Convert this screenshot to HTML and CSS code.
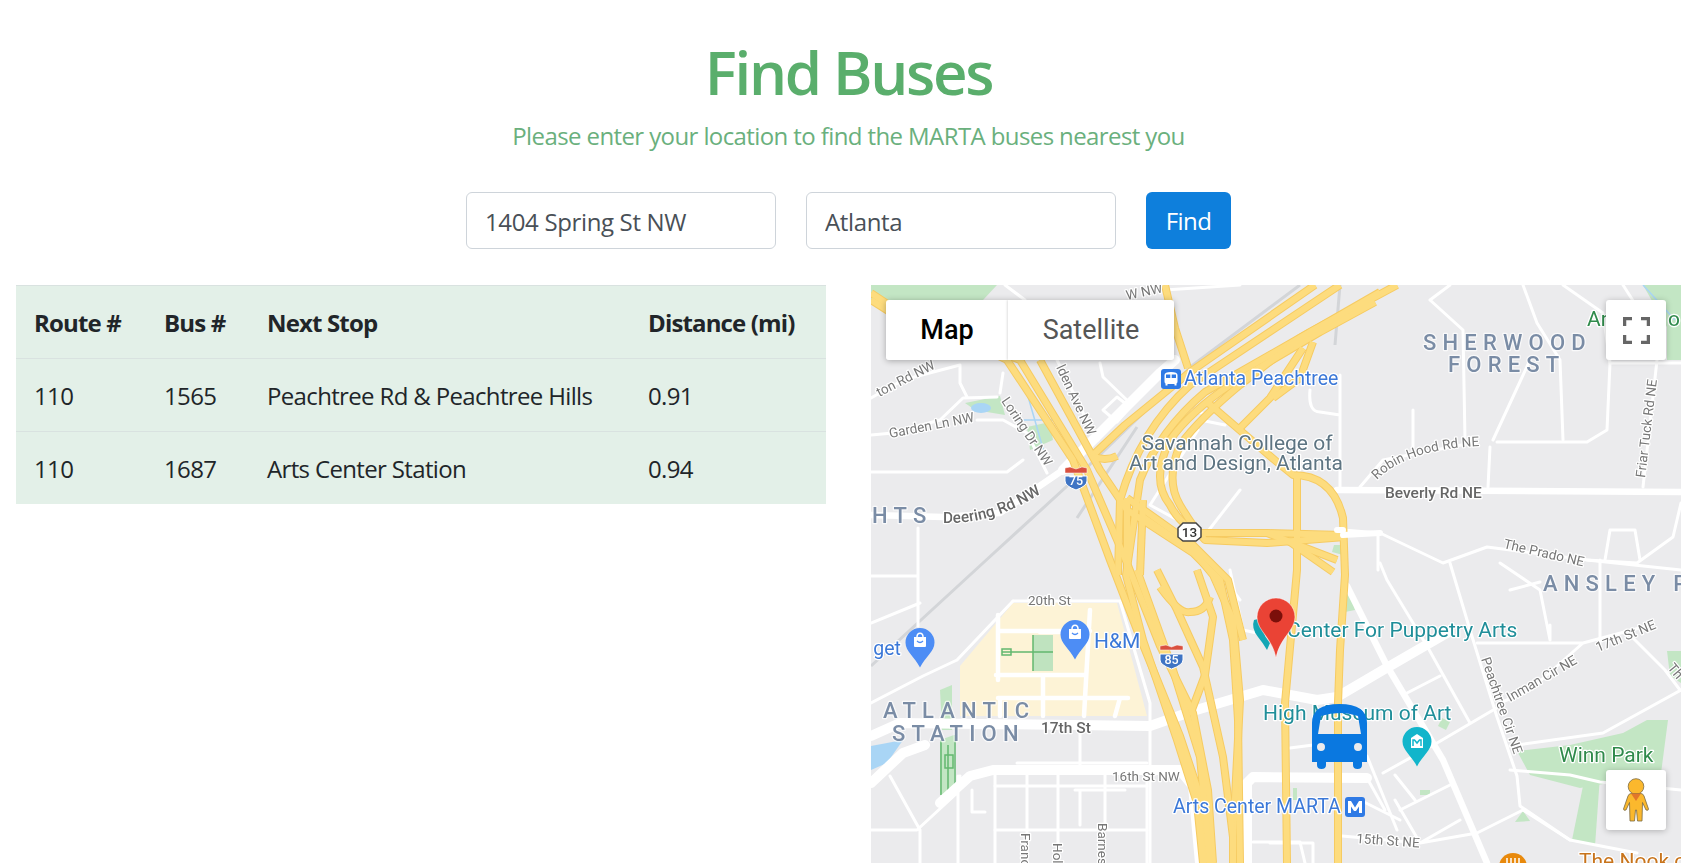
FILE: index.html
```html
<!DOCTYPE html>
<html lang="en">
<head>
<meta charset="utf-8">
<title>Find Buses</title>
<link rel="stylesheet" href="styles.css">
</head>
<body>
<header class="head">
  <h1 class="title">Find Buses</h1>
  <p class="lead">Please enter your location to find the MARTA buses nearest you</p>
  <form class="search">
    <input class="field" type="text" value="1404 Spring St NW">
    <input class="field" type="text" value="Atlanta">
    <button class="find" type="button">Find</button>
  </form>
</header>
<main class="content">
  <table class="buses">
    <colgroup><col class="c1"><col class="c2"><col class="c3"><col class="c4"></colgroup>
    <thead>
      <tr><th>Route #</th><th>Bus #</th><th>Next Stop</th><th>Distance (mi)</th></tr>
    </thead>
    <tbody>
      <tr><td>110</td><td>1565</td><td>Peachtree Rd &amp; Peachtree Hills</td><td>0.91</td></tr>
      <tr><td>110</td><td>1687</td><td>Arts Center Station</td><td>0.94</td></tr>
    </tbody>
  </table>
  <div class="map">
    <svg class="canvas" viewBox="871 285 810 578" xmlns="http://www.w3.org/2000/svg">
      <defs>
        <g id="hwys">
          <path d="M871 293L886 303L1007 360L1073 460L1110 560L1137 630L1180 736L1200 796L1205 863"/>
          <path d="M871 300L890 312L1020 360L1087 470L1127 563L1160 646L1193 713L1208 790L1213 863"/>
          <path d="M1040 360L1100 470L1127 510L1193 553L1220 580L1233 640L1238 720L1240 863"/>
          <path d="M1397 285L1310 332L1205 392Q1160 430 1140 480L1126 575L1143 640L1177 740L1197 803L1203 863"/>
          <path d="M1340 285L1280 325L1190 385Q1140 430 1120 500L1118 575"/>
          <path d="M1315 285L1190 372L1125 425L1092 456"/>
          <path d="M1092 456Q1105 462 1117 456"/>
          <path d="M1375 302L1320 332L1230 385Q1190 412 1170 440Q1150 480 1170 505Q1180 525 1200 533L1267 533L1343 535"/>
          <path d="M1380 292L1300 338L1240 385Q1200 418 1180 445Q1165 480 1180 505Q1195 530 1205 540L1267 543L1345 537"/>
          <path d="M1127 498L1193 545L1228 580L1243 640"/>
          <path d="M1140 515L1195 553L1213 575L1233 620L1240 700L1233 837L1233 863"/>
          <path d="M1157 570L1177 610L1203 667L1223 757L1233 837"/>
          <path d="M1197 570L1213 617L1205 675L1190 715"/>
          <path d="M1160 587Q1180 615 1190 612Q1205 612 1210 597"/>
          <path d="M1137 570L1173 670L1200 757L1210 863"/>
          <path d="M1165 285L1175 328L1188 368"/>
          <path d="M1207 402L1277 462L1293 475Q1333 475 1343 518L1345 575L1340 650L1338 703L1338 863"/>
          <path d="M1297 478L1297 570L1285 703L1287 863"/>
          <path d="M1303 348L1270 398L1240 428"/>
          <path d="M1313 342L1300 378L1273 398"/>
          <path d="M1267 533L1337 560"/>
          <path d="M1290 542L1333 572"/>
          <path d="M1127 498L1127 575"/>
          <path d="M1143 500L1140 575"/>
        </g>
      </defs>
      <rect class="land" x="871" y="285" width="810" height="578"/>

      <g class="park">
        <polygon points="871,285 997,285 983,300 871,300"/>
        <polygon points="1643,285 1681,285 1681,360 1667,360 1667,327"/>
        <polygon points="1517,751 1570,745 1623,733 1647,720 1668,720 1660,781 1620,781 1580,788 1530,775"/>
        <polygon points="1585,776 1600,776 1595,846 1572,840"/>
        <polygon points="1667,651 1681,651 1681,683 1670,676"/>
        <polygon points="1523,811 1530,821 1515,822"/>
        <polygon points="1027,427 1050,422 1053,440 1030,450"/>
        <polygon points="965,403 1000,396 1005,415 975,410"/>
        <polygon points="1340,600 1350,590 1355,610 1345,612"/>
        <polygon points="1334,545 1345,545 1343,555 1332,552"/>
        <polygon points="1293,788 1297,788 1297,800 1293,800"/>
        <polygon points="1442,718 1450,722 1446,730 1438,726"/>
        <polygon points="940,690 952,685 952,730 942,730"/>
        <polygon points="940,740 954,735 954,795 940,795"/>
        <polygon points="1420,790 1430,790 1430,795 1420,795"/>
      </g>
      <g class="water">
        <ellipse cx="981" cy="408" rx="10" ry="5"/>
        <polygon points="871,746 903,740 887,763 871,770"/>
      </g>
      <path class="stream" d="M1027 393L1044 452M1017 420L1060 420M1643 285L1675 320"/>

      <polygon class="campus" points="960,666 1013,603 1117,603 1147,716 960,716"/>
      <rect class="park-solid" x="1033" y="635" width="20" height="36"/>
      <path class="park-line" d="M1002 652L1053 652M1033 635L1033 671M1002 649L1011 649L1011 655L1002 655Z"/>
      <path class="park-line" d="M941 740L941 795M948 745L948 795M955 735L955 785M945 755L953 755L953 768L945 768Z"/>

      <path class="rail" d="M871 666L983 563L1077 477L1193 365L1300 285M1077 518L1137 427M1335 345L1340 285"/>

      <g class="road thin">
        <path d="M871 398L903 380L960 365L960 383L967 397M1003 373L1000 393"/>
        <path d="M871 435L893 433L940 420L963 398L997 397M977 420L1003 420L1027 433L1047 473"/>
        <path d="M871 472L1007 472L1023 460"/>
        <path d="M1057 360L1093 433L1098 440"/>
        <path d="M1100 363L1103 377L1130 403M1103 410L1117 397L1130 407L1117 422Z"/>
        <path d="M1005 285L1025 300M1165 290L1240 285"/>
        <path d="M1198 430L1150 505L1205 535L1240 490M1200 420L1225 425M1210 560L1240 600M1190 410L1210 415"/>
        <path d="M1340 375L1340 490M1310 390Q1308 412 1320 412L1340 415M1343 530L1380 533L1443 563L1487 547L1587 560L1681 570M1378 533L1378 570"/>
        <path d="M1430 300L1450 285M1430 300L1463 330L1465 440M1523 285L1537 323L1560 360L1563 440M1530 360L1493 440"/>
        <path d="M1497 442L1587 442L1607 430L1610 363L1681 363M1490 447L1488 487M1360 487L1383 460L1477 442M1413 410L1413 447"/>
        <path d="M1657 360L1643 487M1563 285L1603 313L1610 363M1623 285L1637 307"/>
        <path d="M1681 503L1673 537L1637 563L1587 560M1605 560L1610 530L1635 530L1640 560"/>
        <path d="M1450 563L1470 630L1497 717L1517 776L1520 806L1570 840L1637 853"/>
        <path d="M1477 643L1583 643L1647 626M1500 703L1530 690L1583 643M1630 635L1665 670L1680 690"/>
        <path d="M1510 746L1603 733L1681 690M1510 770L1570 775L1600 782L1681 790M1437 743L1500 706M1383 773L1437 743"/>
        <path d="M1427 646L1470 723M1407 693L1440 676M1380 563L1387 580L1427 646M1367 756L1397 830"/>
        <path d="M1342 836L1420 843L1477 833L1523 810L1570 840M1270 843L1313 843L1313 863M1395 775L1415 800M1400 810L1450 785M1395 800L1420 843M1420 843L1460 820"/>
        <path d="M1500 563L1540 590L1550 640M1510 590L1540 582M1550 625L1550 640M1600 560L1600 643"/>
        <path d="M918 528L918 563L918 626M871 623L920 603M871 576L918 576"/>
        <path d="M1013 601L1120 601L1150 703L1150 863"/>
        <path d="M957 660L1013 601M871 703L923 676L957 660"/>
        <path d="M890 776L920 830L920 863M871 830L917 830L957 793L960 776M958 776L958 863"/>
        <path d="M995 770L995 863M1027 770L1027 863M1058 770L1058 863M1105 770L1105 830M1147 770L1147 863"/>
        <path d="M995 786L1147 786M995 830L1147 830M1017 763L1147 763M1080 733L1080 770"/>
        <path d="M972 790L972 812L985 812M1075 790L1125 790M1080 790L1080 825"/>
        <path d="M1230 570L1243 630L1257 633M1290 748L1313 745"/>
        <path d="M1367 778L1385 810M1360 800L1400 820"/>
        <path d="M1253 842L1300 842L1305 863"/>
      </g>
      <g class="road block">
        <path d="M998 631L1090 631M998 615L998 680M996 675L1085 675M1043 675L1043 716M1090 610L1084 716M1084 698L1128 698M998 698L1084 698M1040 632L1085 632M1000 716L1000 698M1120 698L1115 716"/>
      </g>
      <g class="road wide">
        <path d="M1063 470L1160 373L1175 360"/>
        <path d="M871 736L900 723L1150 726L1193 711L1263 690L1317 700L1337 697L1383 670L1447 633"/>
        <path d="M871 783L903 753L925 745"/>
        <path d="M940 803L970 776L993 770L1180 770L1193 786L1200 863"/>
        <path d="M1247 863L1247 783L1253 777L1367 778"/>
      </g>
      <g class="road mid">
        <path d="M871 515L943 517L1000 513L1063 470"/>
        <path d="M1337 490L1681 492"/>
        <path d="M1347 586L1387 666L1443 760L1487 863"/>
      </g>

      <use href="#hwys" class="hw-edge"/>
      <use href="#hwys" class="hw-fill"/>
      <path class="road over" d="M1337 530L1343 530M1343 535L1380 533"/>

      <text class="hood" x="1423" y="350">SHERWOOD</text>
      <text class="hood" x="1448" y="372">FOREST</text>
      <text class="hood" x="1543" y="591">ANSLEY P</text>
      <text class="hood" x="872" y="523">HTS</text>
      <text class="hood" x="883" y="718">ATLANTIC</text>
      <text class="hood" x="892" y="741">STATION</text>

      <text class="poi blue" x="1184" y="385">Atlanta Peachtree</text>
      <text class="poi slate large" x="1237" y="450" text-anchor="middle">Savannah College of</text>
      <text class="poi slate large" x="1236" y="470" text-anchor="middle">Art and Design, Atlanta</text>
      <text class="poi green large" x="1587" y="326">Ar</text>
      <text class="poi green large" x="1668" y="326">o</text>
      <text class="poi teal large" x="1287" y="637">Center For Puppetry Arts</text>
      <text class="poi teal large" x="1263" y="720">High Museum of Art</text>
      <text class="poi green large" x="1559" y="762">Winn Park</text>
      <text class="poi blue" x="1173" y="813">Arts Center MARTA</text>
      <text class="poi orange large" x="1579" y="868">The Nook o</text>
      <text class="poi blue large" x="1094" y="648">H&amp;M</text>
      <text class="poi blue end" x="901" y="655">get</text>

      <text class="street big" x="1385" y="498">Beverly Rd NE</text>
      <text class="street big" x="1041" y="733">17th St</text>
      <path id="deering" class="none" d="M943 523Q1000 525 1056 483"/>
      <text class="street big"><textPath href="#deering">Deering Rd NW</textPath></text>
      <path id="robin" class="none" d="M1377 480Q1405 450 1478 446"/>
      <text class="street"><textPath href="#robin">Robin Hood Rd NE</textPath></text>
      <text class="street" transform="translate(1645 478) rotate(-83)">Friar Tuck Rd NE</text>
      <text class="street" transform="translate(1503 548) rotate(13)">The Prado NE</text>
      <text class="street" transform="translate(1356 843) rotate(4)">15th St NE</text>
      <text class="street" transform="translate(1598 652) rotate(-22)">17th St NE</text>
      <text class="street" transform="translate(1510 702) rotate(-30)">Inman Cir NE</text>
      <text class="street" transform="translate(1481 659) rotate(71)">Peachtree Cir NE</text>
      <text class="street" transform="translate(1667 668) rotate(50)">Th</text>
      <text class="street" x="1028" y="605">20th St</text>
      <text class="street" x="1112" y="781">16th St NW</text>
      <text class="street" transform="translate(890 438) rotate(-11)">Garden Ln NW</text>
      <text class="street end" transform="translate(936 368) rotate(-27)">ton Rd NW</text>
      <text class="street" transform="translate(1001 401) rotate(56)">Loring Dr NW</text>
      <text class="street end" transform="translate(1088 436) rotate(65)">lden Ave NW</text>
      <text class="street" transform="translate(1127 300) rotate(-12)">W NW</text>
      <text class="street" transform="translate(1098 823) rotate(90)">Barnes</text>
      <text class="street" transform="translate(1021 833) rotate(90)">Franc</text>
      <text class="street" transform="translate(1053 843) rotate(90)">Hol</text>

      <!-- transit and place badges -->
      <rect class="b-blue" x="1161" y="369" width="20" height="20" rx="3"/>
      <path class="b-white" d="M1164.500 381.500V375Q1164.500 372 1171 372Q1177.500 372 1177.500 375V381.500Q1177.500 383 1176.500 383.500V385.500H1174.500V384H1167.500V385.500H1165.500V383.500Q1164.500 383 1164.500 381.500Z"/>
      <path class="b-blue" d="M1166 374.500H1170.300V378H1166ZM1171.700 374.500H1176V378H1171.700Z"/>
      <rect class="b-blue" x="1345" y="797" width="20" height="20" rx="3"/>
      <path class="b-white" d="M1348 813V801H1351L1355 807.500L1359 801H1362V813H1359V806.500L1356 811H1354L1351 806.500V813Z"/>

      <g class="shield">
        <path class="shield-blue" d="M1065 476H1087V481Q1087 486 1076 490Q1065 486 1065 481Z"/>
        <path class="shield-red" d="M1065 468L1070 467L1076 469L1082 467L1087 468V473H1065Z"/>
        <text class="shield-num" x="1076" y="485">75</text>
      </g>
      <g class="shield">
        <path class="shield-blue" d="M1160 654H1183V660Q1183 665 1171.500 669Q1160 665 1160 660Z"/>
        <path class="shield-red" d="M1160 646L1166 645L1171.500 647L1177 645L1183 646V650H1160Z"/>
        <text class="shield-num" x="1171.500" y="664">85</text>
      </g>
      <path class="state" d="M1183 523H1196L1201 528V537L1196 541H1183L1178 537V528Z"/>
      <text class="state-num" x="1189.500" y="537">13</text>

      <!-- place pins -->
      <g class="pin-blue">
        <path class="pin-shape" d="M920 628a14.500 14.500 0 0 1 14.500 14.500c0 9-9 14-14.500 25c-5.500-11-14.500-16-14.500-25a14.500 14.500 0 0 1 14.500-14.500Z"/>
        <path class="pin-bag" d="M914 637h12v9q0 1-1 1h-10q-1 0-1-1Z"/>
        <path class="pin-arc" d="M917 637c0-5 6-5 6 0"/>
        <path class="pin-smile" d="M917 641q3 3 6 0"/>
      </g>
      <g class="pin-blue">
        <path class="pin-shape" d="M1075 620a14.500 14.500 0 0 1 14.500 14.500c0 9-9 14-14.500 25c-5.500-11-14.500-16-14.500-25a14.500 14.500 0 0 1 14.500-14.500Z"/>
        <path class="pin-bag" d="M1069 629h12v9q0 1-1 1h-10q-1 0-1-1Z"/>
        <path class="pin-arc" d="M1072 629c0-5 6-5 6 0"/>
        <path class="pin-smile" d="M1072 633q3 3 6 0"/>
      </g>
      <g class="pin-teal">
        <path class="pin-shape" d="M1417 727a14.500 14.500 0 0 1 14.500 14.500c0 9-9 14-14.500 25c-5.500-11-14.500-16-14.500-25a14.500 14.500 0 0 1 14.500-14.500Z"/>
        <path class="pin-bag" d="M1411 738l6-4 6 4v10h-12Z"/>
        <path class="pin-mark" d="M1413 746v-6h1.500l2.500 3 2.500-3h1.500v6"/>
      </g>
      <path class="teal-back" d="M1254 620Q1251 628 1258 637Q1263 643 1267 650L1270 643Q1260 632 1262 618Z"/>
      <circle class="orange-dot" cx="1513" cy="867" r="14"/>
      <path class="orange-mark" d="M1507 858v8M1511 858v8M1515 858v8M1519 858v8"/>

      <!-- location marker -->
      <path class="pin-red" d="M1276 598a19 19 0 0 1 19 19c0 14-15 20-19 41c-4-21-19-27-19-41a19 19 0 0 1 19-19Z"/>
      <circle class="pin-dot" cx="1276" cy="616" r="6.500"/>

      <!-- bus -->
      <path class="bus" fill-rule="evenodd" d="M1312 723Q1312 704 1339.500 704Q1367 704 1367 723V762H1362V765Q1362 769 1357.500 769Q1353 769 1353 765V762H1326V765Q1326 769 1321.500 769Q1317 769 1317 765V762H1312ZM1318 734H1361L1358 716Q1340 710 1321 716ZM1321 743A4 4 0 1 0 1321 751A4 4 0 1 0 1321 743ZM1358 743A4 4 0 1 0 1358 751A4 4 0 1 0 1358 743Z"/>
    </svg>

    <div class="type-toggle">
      <button class="type active" type="button">Map</button>
      <button class="type" type="button">Satellite</button>
    </div>
    <button class="tool full" type="button" aria-label="Toggle fullscreen view">
      <svg class="full-icon" viewBox="0 0 27 27" xmlns="http://www.w3.org/2000/svg">
        <path d="M1.500 9V1.500H9M18 1.500H25.500V9M25.500 18V25.500H18M9 25.500H1.500V18"/>
      </svg>
    </button>
    <button class="tool peg" type="button" aria-label="Street View">
      <svg class="peg-icon" viewBox="0 0 26 44" xmlns="http://www.w3.org/2000/svg">
        <circle class="peg-body" cx="13" cy="8.500" r="7.800"/>
        <path class="peg-body" d="M8 15.500L18 15.500Q20 15.500 21 18L25.500 31Q25.500 33 23 32L19.500 24.500L19 43H14.500L13.500 32H12.500L11.500 43H7L6.500 24.500L3 32Q0.500 33 0.500 31L5 18Q6 15.500 8 15.500Z"/>
        <path class="peg-collar" d="M8 15.500H18L13 23Z"/>
      </svg>
    </button>
  </div>
</main>
</body>
</html>
```

FILE: styles.css
```css
html, body {
  margin: 0;
  padding: 0;
  height: 100%;
  overflow: hidden;
  background: #fff;
}

body {
  font-family: "Open Sans", "Noto Sans", sans-serif;
  font-size: 24px;
  line-height: 1.5;
  color: #212529;
}

.head {
  padding: 36px 8px 0 0;
  text-align: center;
}

.title {
  margin: 0;
  font-size: 60px;
  line-height: 72px;
  font-weight: 600;
  letter-spacing: -2.3px;
  color: #5aae6c;
}

.lead {
  margin: 10px 0 0;
  font-size: 24px;
  line-height: 36px;
  font-weight: 400;
  letter-spacing: -0.6px;
  color: #6ab07d;
}

.search {
  display: flex;
  justify-content: center;
  gap: 30px;
  margin-top: 38px;
}

.field {
  box-sizing: border-box;
  width: 310px;
  height: 57px;
  padding: 2px 18px 0;
  border: 1.5px solid #ced4da;
  border-radius: 6px;
  font: 400 24px "Open Sans", "Noto Sans", sans-serif;
  letter-spacing: -0.35px;
  color: #495057;
  background: #fff;
}

.find {
  box-sizing: border-box;
  width: 85px;
  height: 57px;
  border: 0;
  border-radius: 6px;
  font: 400 24px "Open Sans", "Noto Sans", sans-serif;
  letter-spacing: -0.6px;
  color: #fff;
  background: #0e7fdc;
}

.content {
  display: grid;
  grid-template-columns: 1fr 1fr;
  gap: 45px;
  padding: 36px 24px 0 16px;
}

.buses {
  width: 100%;
  align-self: start;
  table-layout: fixed;
  border-collapse: collapse;
  background: #e3f0e8;
  letter-spacing: -0.65px;
}

.c1 { width: 130px; }
.c2 { width: 103px; }
.c3 { width: 381px; }

.buses th,
.buses td {
  padding: 19px 18px 17px;
  height: 72.7px;
  box-sizing: border-box;
  text-align: left;
  border-top: 1px solid #d9e2e0;
  white-space: nowrap;
}

.buses th {
  font-weight: 700;
  letter-spacing: -0.85px;
}

.map {
  position: relative;
  height: 578px;
  overflow: hidden;
}

.canvas {
  display: block;
  width: 100%;
  height: 100%;
  filter: blur(0.4px);
}

.land { fill: #ebebed; }
.park polygon { fill: #c3e6c4; }
.park-solid { fill: #bfe3bf; }
.park-line { fill: none; stroke: #63b86f; stroke-width: 1.5; }
.water polygon, .water ellipse { fill: #a9d5f5; }
.stream { fill: none; stroke: #a9d5f5; stroke-width: 1.5; }
.campus { fill: #fdf3d6; }
.rail { fill: none; stroke: #d3d5d8; stroke-width: 3; }

.road { fill: none; stroke: #fff; stroke-linecap: round; stroke-linejoin: round; }
.thin { stroke-width: 3; }
.block { stroke-width: 4.5; }
.mid { stroke-width: 6.5; }
.wide { stroke-width: 10; }
.over { stroke-width: 6; }

.hw-edge, .hw-fill { fill: none; stroke-linejoin: round; stroke-linecap: butt; }
.hw-edge { stroke: #f6cb62; stroke-width: 8; }
.hw-fill { stroke: #fddc7e; stroke-width: 6; }

.canvas text {
  font-family: Roboto, "Liberation Sans", sans-serif;
  paint-order: stroke;
  stroke: #fff;
  stroke-width: 2.5px;
  stroke-linejoin: round;
}

.none { fill: none; stroke: none; }
.end { text-anchor: end; }

.canvas .hood {
  font-size: 22px;
  font-weight: 500;
  letter-spacing: 6.2px;
  fill: #7a8ca5;
  stroke-opacity: 0.7;
}

.canvas .poi { font-size: 19.5px; }
.canvas .large { font-size: 21px; }
.canvas .blue { fill: #3b78d8; }
.canvas .slate { fill: #5d7482; }
.canvas .teal { fill: #1f8e99; }
.canvas .green { fill: #2f8a4b; }
.canvas .orange { fill: #c8741c; }

.canvas .street { font-size: 13.5px; fill: #777; }
.canvas .big { font-size: 15.5px; font-weight: 500; fill: #666; }

.shield-blue { fill: #3f74c4; stroke: #fff; stroke-width: 1; }
.shield-red { fill: #d9503f; stroke: #fff; stroke-width: 0.5; }
.canvas .shield-num {
  font-size: 12.5px;
  font-weight: 500;
  text-anchor: middle;
  fill: #fff;
  stroke: none;
}

.state { fill: #fff; stroke: #444; stroke-width: 1.5; }
.canvas .state-num {
  font-size: 13.5px;
  font-weight: 500;
  text-anchor: middle;
  fill: #333;
  stroke: none;
}

.b-blue { fill: #2f7ae5; }
.b-white { fill: #fff; }

.pin-blue .pin-shape { fill: #4d8df5; }
.pin-teal .pin-shape { fill: #12b5cb; }
.pin-bag { fill: #fff; }
.pin-arc { fill: none; stroke: #fff; stroke-width: 1.5; }
.pin-smile { fill: none; stroke: #4d8df5; stroke-width: 1.2; }
.pin-mark { fill: none; stroke: #12b5cb; stroke-width: 1.5; }
.teal-back { fill: #13a6b5; }
.orange-dot { fill: #e8890c; }
.orange-mark { fill: none; stroke: #fff; stroke-width: 1.5; }
.pin-red { fill: #ea4335; stroke: #fff; stroke-width: 0.5; }
.pin-dot { fill: #7b0f0a; }
.bus { fill: #0a78e0; }

.type-toggle {
  position: absolute;
  top: 15px;
  left: 15px;
  display: flex;
  border-radius: 3px;
  box-shadow: 0 1px 6px rgba(0, 0, 0, 0.3);
  overflow: hidden;
}

.type {
  height: 60px;
  padding: 0;
  border: 0;
  background: #fff;
  font: 400 27px Roboto, sans-serif;
  color: #565656;
}

.type:first-child { width: 122px; }
.type:last-child { width: 166px; box-shadow: -1px 0 2px rgba(0, 0, 0, 0.12); }
.active { font-weight: 500; color: #000; }

.tool {
  position: absolute;
  right: 15px;
  width: 60px;
  height: 60px;
  padding: 0;
  border: 0;
  border-radius: 3px;
  background: #fff;
  box-shadow: 0 1px 6px rgba(0, 0, 0, 0.25);
  display: flex;
  align-items: center;
  justify-content: center;
}

.full { top: 15px; }
.peg { top: 485px; }

.full-icon { width: 27px; height: 27px; }
.full-icon path { fill: none; stroke: #666; stroke-width: 3.5; }

.peg-icon { width: 26px; height: 44px; }
.peg-body { fill: #fbb82d; stroke: #7a6a44; stroke-width: 0.8; }
.peg-collar { fill: #e2762a; }
```
